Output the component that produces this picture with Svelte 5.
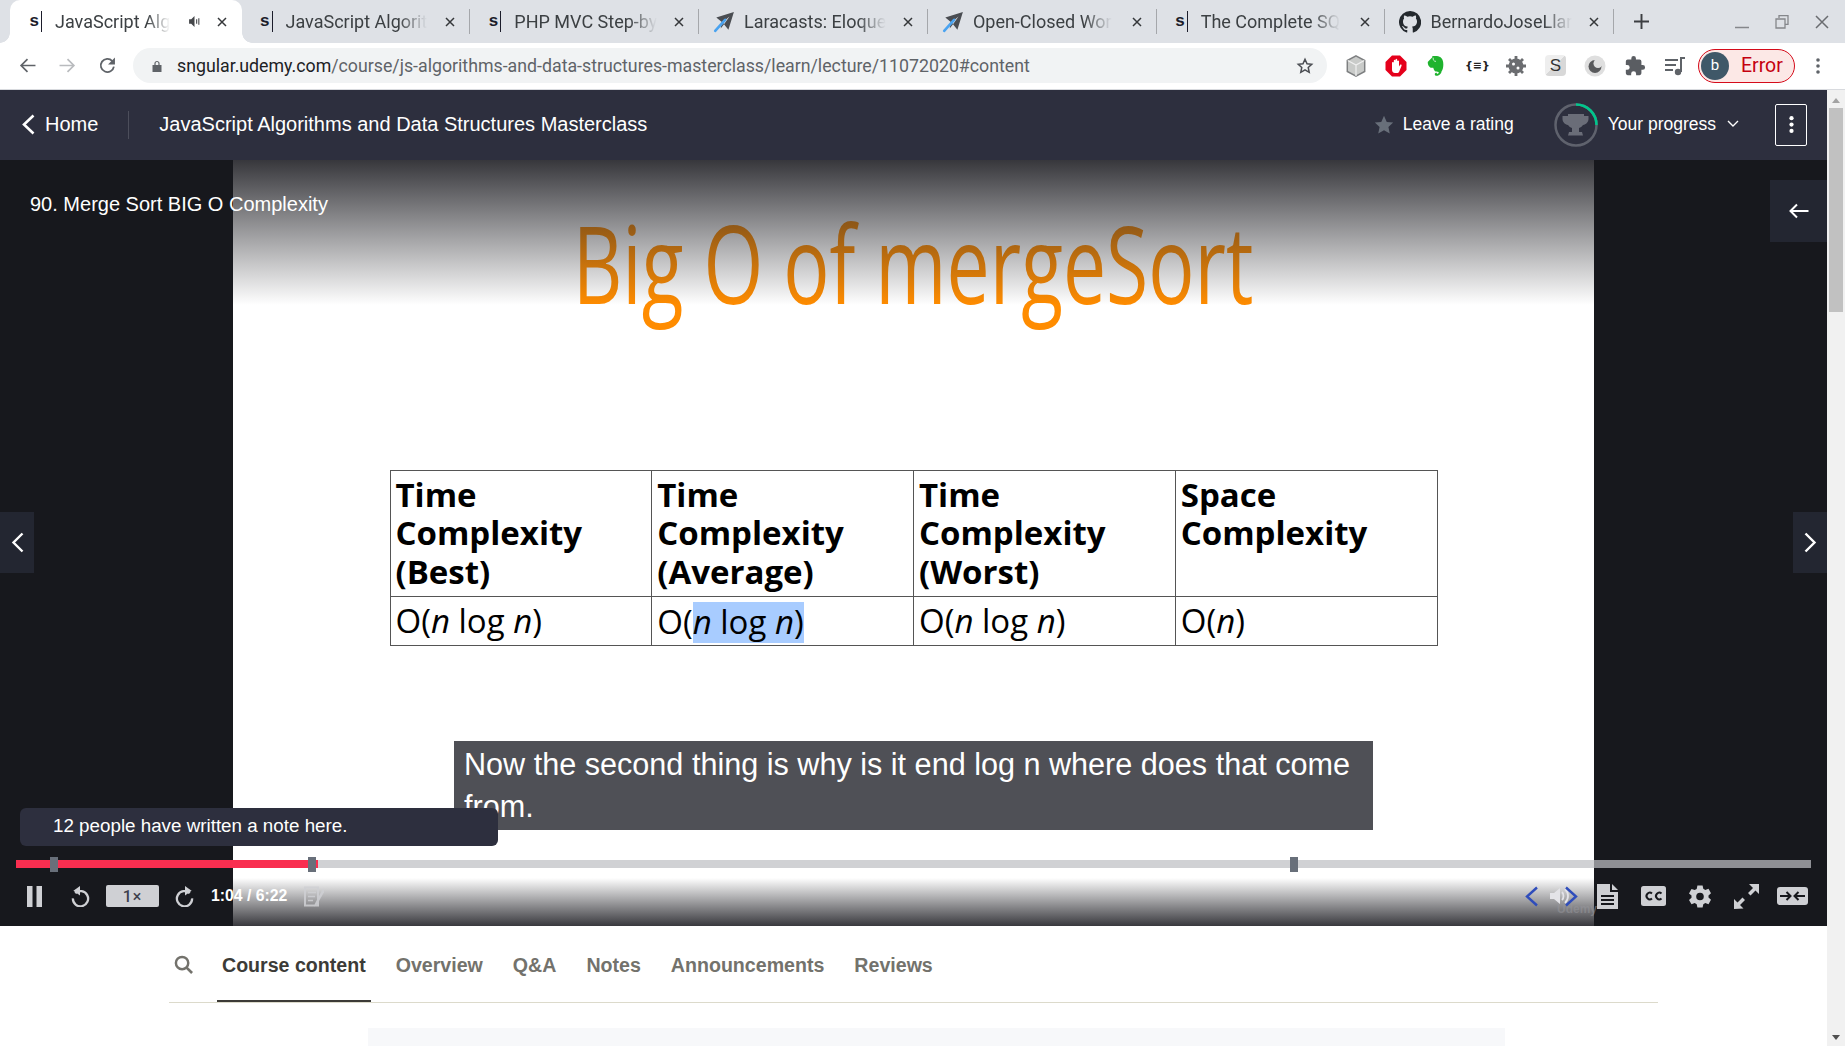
<script>
  const tabs = [
    { title: "JavaScript Alg", icon: "udemy", active: true, sound: true },
    { title: "JavaScript Algorit", icon: "udemy" },
    { title: "PHP MVC Step-by", icon: "udemy" },
    { title: "Laracasts: Eloque", icon: "plane" },
    { title: "Open-Closed Wor", icon: "plane" },
    { title: "The Complete SQ", icon: "udemy" },
    { title: "BernardoJoseLlar", icon: "github" }
  ];

  const courseTabs = ["Course content", "Overview", "Q&A", "Notes", "Announcements", "Reviews"];
</script>

<div class="page">
  <div class="tabstrip">
    {#each tabs as tab}
      <div class="tab" class:active={tab.active}>
        {#if tab.icon === "udemy"}
          <span class="fav-udemy">s</span>
        {:else if tab.icon === "plane"}
          <svg class="fav" viewBox="0 0 20 20"><path d="M19 1 3 6l5 4-1 6 3-4 4 5zM15 5l-6 5 1 2z" fill="#4a4d52" fill-rule="evenodd"/><path d="M11 8 2 18" stroke="#4aa3f0" stroke-width="2.400" stroke-linecap="round"/></svg>
        {:else}
          <svg class="fav" viewBox="0 0 16 16"><path fill="#24292e" d="M8 0a8 8 0 0 0-2.500 15.600c.4.1.5-.2.5-.4v-1.400c-2.200.5-2.700-1-2.700-1-.4-.9-.9-1.200-.9-1.200-.7-.5.1-.5.1-.5.8.1 1.200.8 1.200.8.7 1.200 1.900.9 2.300.7.1-.5.3-.9.5-1.100-1.800-.2-3.600-.9-3.600-4 0-.9.3-1.600.8-2.100-.1-.2-.4-1 .1-2.100 0 0 .7-.2 2.200.8a7.600 7.600 0 0 1 4 0c1.500-1 2.200-.8 2.200-.8.4 1.100.2 1.900.1 2.100.5.6.8 1.300.8 2.100 0 3.100-1.900 3.800-3.700 4 .3.300.6.700.6 1.500v2.200c0 .2.1.5.6.4A8 8 0 0 0 8 0z"/></svg>
        {/if}
        <span class="tab-title">{tab.title}</span>
        {#if tab.sound}
          <svg class="speaker" viewBox="0 0 12 12"><path d="M1 4h2l3-3v10L3 8H1z" fill="#45474a"/><path d="M8 4v4M10 3v6" stroke="#45474a"/></svg>
        {/if}
        <svg class="close" viewBox="0 0 10 10"><path d="M1 1l8 8M9 1 1 9" stroke="#35373a" stroke-width="1.500"/></svg>
      </div>
    {/each}
    <svg class="newtab" viewBox="0 0 14 14"><path d="M7 0v14M0 7h14" stroke="#3c3e42" stroke-width="1.800"/></svg>
    <div class="window-btns">
      <svg viewBox="0 0 14 14"><path d="M0 12.500h14" stroke="#85878b" stroke-width="1.500"/></svg>
      <svg viewBox="0 0 14 14"><path d="M4 3V.7h9v8.600h-3M1 4h9v9H1z" fill="none" stroke="#85878b" stroke-width="1.300"/></svg>
      <svg viewBox="0 0 14 14"><path d="M1 1l12 12M13 1 1 13" stroke="#6a6c70" stroke-width="1.500"/></svg>
    </div>
  </div>

  <div class="toolbar">
    <svg class="nav" viewBox="0 0 16 16"><path d="M15.500 8H2M8 2 2 8l6 6" fill="none" stroke="#5f6368" stroke-width="1.600"/></svg>
    <svg class="nav" viewBox="0 0 16 16"><path d="M.5 8H14M8 2l6 6-6 6" fill="none" stroke="#b9bbbe" stroke-width="1.600"/></svg>
    <svg class="nav" viewBox="0 0 16 16"><path d="M14 9A6.200 6.200 0 1 1 12.500 3.800" fill="none" stroke="#5f6368" stroke-width="1.700"/><path d="M15 .5v6.500H8.500z" fill="#5f6368"/></svg>
    <div class="omnibox">
      <svg class="lock" viewBox="0 0 10 12"><path d="M.5 5h9v7h-9z" fill="#5f6368"/><path d="M3 5V3.500a2 2 0 0 1 4 0V5" fill="none" stroke="#5f6368" stroke-width="1.200"/></svg>
      <span class="url"><b>sngular.udemy.com</b>/course/js-algorithms-and-data-structures-masterclass/learn/lecture/11072020#content</span>
      <svg class="bookmark" viewBox="0 0 24 24"><path d="m12 3 2.700 6 6.300.7-4.700 4.300 1.300 6.400L12 17.200l-5.600 3.200 1.300-6.400L3 9.700 9.300 9z" fill="none" stroke="#4a4d52" stroke-width="2"/></svg>
    </div>
    <div class="extensions">
      <svg viewBox="0 0 22 24"><path d="M11 1 20.500 6v12L11 23 1.500 18V6z" fill="#c9cbc9" stroke="#7d7f80" stroke-width="1.600"/><path d="M11 11v12M2 6l9 5 9-5" fill="none" stroke="#f0f0f0" stroke-width="1.300"/></svg>
      <svg viewBox="0 0 22 22"><path d="M7 .5h8L21.500 7v8L15 21.500H7L.5 15V7z" fill="#e5001b"/><path d="M7 11V7.500a1 1 0 0 1 1.800 0V10V5.500a1 1 0 0 1 1.700 0V10V4.500a1 1 0 0 1 1.700 0V10V6a1 1 0 0 1 1.800 0v5.500l1-1.500c1-1 2 0 1.500 1L14 17c-.5.700-1 1-2 1H10c-2 0-3-1.500-3-3.500z" fill="#fff"/></svg>
      <svg viewBox="0 0 20 24"><path d="M1 7.500 6 2.500V1h5c4 .5 7 3 7 9 0 3-.5 6-2 8 0 3-5 6-7 4-1-1.500.5-3.500 2-2.500-.8 1.500 2 1.500 2-1-4 0-5-1-6-4.500-3 .3-6-1.500-6-6.500z" fill="#1fb32e"/><path d="M7 3c-.5 2 .5 4 3 4" fill="none" stroke="#fff" stroke-width=".8"/></svg>
      <span class="ext-json">{"{≡}"}</span>
      <svg viewBox="0 0 22 22"><circle cx="11" cy="11" r="7.500" fill="#6b6d70"/><path d="M11 1v20M1 11h20M4 4l14 14M18 4 4 18" stroke="#6b6d70" stroke-width="2.800"/><circle cx="8.500" cy="9" r="1.500" fill="#fff"/><circle cx="13" cy="13" r="1.500" fill="#fff"/></svg>
      <span class="ext-s">S</span>
      <svg viewBox="0 0 22 22"><circle cx="11" cy="11" r="10.500" fill="#dfdfdf"/><circle cx="11" cy="11.500" r="6.500" fill="#58595b"/><circle cx="14" cy="8.500" r="4.500" fill="#dfdfdf"/></svg>
      <svg viewBox="0 0 24 24"><path fill="#5a5d62" d="M20.500 11H19V7a2 2 0 0 0-2-2h-4V3.500a2.500 2.500 0 0 0-5 0V5H4a2 2 0 0 0-2 2v3.800h1.500a2.700 2.700 0 0 1 0 5.400H2V20a2 2 0 0 0 2 2h3.800v-1.500a2.700 2.700 0 0 1 5.400 0V22H17a2 2 0 0 0 2-2v-4h1.500a2.500 2.500 0 0 0 0-5z"/></svg>
      <svg viewBox="0 0 22 22"><path d="M1 5h13M1 10h11M1 15h8" stroke="#5f6368" stroke-width="1.800"/><path d="M17 17V3h4" fill="none" stroke="#5f6368" stroke-width="2"/><circle cx="14" cy="17" r="3.200" fill="#5f6368"/></svg>
    </div>
    <div class="profile">
      <span class="avatar">b</span>
      <span>Error</span>
    </div>
    <svg class="kebab" viewBox="0 0 4 16"><circle cx="2" cy="2" r="1.800"/><circle cx="2" cy="8" r="1.800"/><circle cx="2" cy="14" r="1.800"/></svg>
  </div>

  <div class="viewport">
    <div class="content">
      <header class="course-header">
        <svg class="back" viewBox="0 0 14 21"><path d="M12.500 1.500 3 10.500l9.500 9" fill="none" stroke="#fff" stroke-width="2.600"/></svg>
        <span class="home">Home</span>
        <span class="divider"></span>
        <span class="course-title">JavaScript Algorithms and Data Structures Masterclass</span>
        <div class="header-right">
          <svg class="rate-star" viewBox="0 0 24 24"><path d="m12 1 3.300 7.300 7.700.8-5.700 5.300 1.600 7.800L12 18.300l-6.900 3.900 1.600-7.800L1 9.100l7.700-.8z"/></svg>
          <span class="rate">Leave a rating</span>
          <div class="ring">
            <svg viewBox="0 0 44 44">
              <circle cx="22" cy="22" r="20.500" fill="none" stroke="#5f626d" stroke-width="2.500"/>
              <path d="M22 1.500A20.500 20.500 0 0 1 42.500 22" fill="none" stroke="#00c68c" stroke-width="2.500"/>
              <path d="M14 11h16v2h4.500v3c0 3-2.500 5.500-5.500 6-1 1.700-2.500 2.500-4 3V29h3l1 3.500H14l1-3.500h3v-4c-1.500-.5-3-1.300-4-3-3-.5-5.500-3-5.500-6v-3H14z" fill="#6a6d78"/>
            </svg>
          </div>
          <span class="progress-label">Your progress</span>
          <svg class="chev" viewBox="0 0 12 8"><path d="m1 1 5 5 5-5" fill="none" stroke="#fff" stroke-width="1.400"/></svg>
          <div class="more">
            <svg viewBox="0 0 4 16"><circle cx="2" cy="2" r="2"/><circle cx="2" cy="8" r="2"/><circle cx="2" cy="14" r="2"/></svg>
          </div>
        </div>
      </header>

      <section class="player">
        <div class="slide">
          <h1>Big O of mergeSort</h1>
          <table>
            <tbody>
              <tr>
                <th>Time Complexity (Best)</th>
                <th>Time Complexity (Average)</th>
                <th>Time Complexity (Worst)</th>
                <th>Space Complexity</th>
              </tr>
              <tr>
                <td>O(<i>n</i> log <i>n</i>)</td>
                <td>O(<span class="selected"><i>n</i> log <i>n</i>)</span></td>
                <td>O(<i>n</i> log <i>n</i>)</td>
                <td>O(<i>n</i>)</td>
              </tr>
            </tbody>
          </table>
          <div class="caption">Now the second thing is why is it end log n where does that come from.</div>
        </div>

        <div class="lecture-title">90. Merge Sort BIG O Complexity</div>

        <div class="sidebar-toggle">
          <svg viewBox="0 0 20 16"><path d="M19.500 8H2M8 1.500 1.500 8 8 14.500" fill="none" stroke="#fff" stroke-width="2"/></svg>
        </div>
        <div class="side-nav left">
          <svg viewBox="0 0 13 21"><path d="M11.500 1.500 2.500 10.500l9 9" fill="none" stroke="#fff" stroke-width="2.400"/></svg>
        </div>
        <div class="side-nav right">
          <svg viewBox="0 0 13 21"><path d="m1.500 1.500 9 9-9 9" fill="none" stroke="#fff" stroke-width="2.400"/></svg>
        </div>

        <div class="note-tip">12 people have written a note here.</div>
        <div class="watermark">Udemy</div>

        <div class="controls">
          <div class="track">
            <div class="played"></div>
            <span class="mark m1"></span>
            <span class="mark m2"></span>
            <span class="mark m3"></span>
          </div>
          <div class="buttons">
            <svg class="pause" viewBox="0 0 15 21"><path d="M0 0h5.500v21H0zM9.500 0H15v21H9.500z"/></svg>
            <svg class="ctl" viewBox="0 0 20 22"><path d="M4.500 7.500A8 8 0 1 1 2 13" fill="none" stroke="#cfd0d4" stroke-width="2.400"/><path d="M9.500 0v10L2.500 5z"/></svg>
            <span class="speed">1×</span>
            <svg class="ctl" viewBox="0 0 20 22"><path d="M15.500 7.500A8 8 0 1 0 18 13" fill="none" stroke="#cfd0d4" stroke-width="2.400"/><path d="M10.500 0v10l7-5z"/></svg>
            <span class="time">1:04 / 6:22</span>
            <svg class="note-ico" viewBox="0 0 20 20"><path d="M1 1h13v18H1z" fill="none" stroke="#cfd0d4" stroke-width="2"/><path d="M4 6h8M4 10h7M4 14h5" stroke="#cfd0d4" stroke-width="1.600"/><path d="M19 2 11 17l-1 3 3-2 8-14z"/></svg>
            <div class="buttons-right">
              <div class="prev-next">
                <svg class="blue" viewBox="0 0 15 21"><path d="M13 1.500 3 10.500l10 9" fill="none" stroke="#2f4dbb" stroke-width="2.400"/></svg>
                <svg class="volume" viewBox="0 0 20 20"><path d="M0 7h4l6-5v16l-6-5H0z" fill="#e4e4e8"/><path d="M12 6c2 2 2 6 0 8M15 3c4 4 4 10 0 14" fill="none" stroke="#e4e4e8" stroke-width="1.800"/></svg>
                <svg class="blue" viewBox="0 0 15 21"><path d="m2 1.500 10 9-10 9" fill="none" stroke="#2f4dbb" stroke-width="2.400"/></svg>
              </div>
              <svg class="doc" viewBox="0 0 21 25"><path d="M0 0h13v8h8v17H0z"/><path d="M15 0l6 6h-6z"/><path d="M4 12h13M4 16h13M4 20h13" stroke="#17181d" stroke-width="2"/></svg>
              <svg class="cc" viewBox="0 0 25 20"><rect width="25" height="20" rx="2.500"/><path d="M11 7.500a3.300 3.300 0 1 0 0 5M20.500 7.500a3.300 3.300 0 1 0 0 5" fill="none" stroke="#17181d" stroke-width="2"/></svg>
              <svg class="gear" viewBox="0 0 24 24"><path fill-rule="evenodd" d="m14.600 1 .7 3.300 2 1.100 3.200-1.100 2.500 4.400-2.500 2.200v2.200l2.500 2.200-2.500 4.400-3.200-1.100-2 1.100-.7 3.300H9.400l-.7-3.300-2-1.100-3.200 1.100L1 15.500l2.500-2.200v-2.200L1 8.900l2.500-4.400 3.200 1.100 2-1.100L9.400 1zM12 8.200a3.800 3.800 0 1 0 0 7.600 3.800 3.800 0 0 0 0-7.600z"/></svg>
              <svg class="expand" viewBox="0 0 25 25"><path d="M15 0h10v10l-3.500-3.500-5 5-2.500-2.500 5-5zM0 25V15l3.500 3.500 5-5 2.500 2.500-5 5 3.500 3.500z"/></svg>
              <svg class="toggle" viewBox="0 0 31 18"><rect width="31" height="18" rx="3"/><path d="M3 9h10M9.500 5l4 4-4 4M28 9H18M21.500 5l-4 4 4 4" fill="none" stroke="#17181d" stroke-width="2"/></svg>
            </div>
          </div>
        </div>
      </section>

      <nav class="course-tabs">
        <svg class="search" viewBox="0 0 20 20"><circle cx="8.500" cy="8.500" r="6.500" fill="none" stroke="#73726c" stroke-width="2.600"/><path d="m13 13 6 6" stroke="#73726c" stroke-width="2.800"/></svg>
        {#each courseTabs as label, i}
          <span class="course-tab" class:current={i === 0}>{label}</span>
        {/each}
      </nav>
      <div class="panel"></div>
    </div>

    <div class="scrollbar">
      <span class="arrow up"></span>
      <div class="thumb"></div>
      <span class="arrow down"></span>
    </div>
  </div>
</div>

<style>
  :global(body) {
    margin: 0;
    overflow: hidden;
  }

  .page {
    width: 1845px;
    height: 1046px;
    display: flex;
    flex-direction: column;
    overflow: hidden;
    background: #fff;
    font-family: "Liberation Sans", Arial, sans-serif;
  }

  /* browser chrome */
  .tabstrip {
    height: 43px;
    flex: none;
    display: flex;
    align-items: center;
    background: #dee1e6;
    padding-left: 10px;
    box-sizing: border-box;
  }
  .tab {
    width: 228.800px;
    height: 43px;
    flex: none;
    box-sizing: border-box;
    display: flex;
    align-items: center;
    padding: 0 15px 0 14px;
    position: relative;
    font-family: Roboto, "Noto Sans", sans-serif;
    font-size: 18px;
    color: #3c4043;
  }
  .tab::after {
    content: "";
    position: absolute;
    right: 0;
    top: 9px;
    height: 25px;
    width: 1px;
    background: #a5a7ab;
  }
  .tab.active {
    background: #fff;
    border-radius: 10px 10px 0 0;
    width: 231.500px;
    padding-left: 15px;
  }
  .tab.active::before,
  .tab.active::after {
    content: "";
    position: absolute;
    top: auto;
    bottom: 0;
    width: 10px;
    height: 10px;
  }
  .tab.active::before {
    left: -10px;
    background: radial-gradient(circle at 0 0, transparent 9.500px, #fff 10px);
  }
  .tab.active::after {
    right: -10px;
    background: radial-gradient(circle at 100% 0, transparent 9.500px, #fff 10px);
  }
  .fav-udemy {
    width: 17px;
    height: 21px;
    flex: none;
    box-sizing: border-box;
    border-right: 1px solid #1c1d2b;
    padding-right: 2px;
    text-align: right;
    font: bold 17px/20px "Liberation Sans", sans-serif;
    color: #1c1d2b;
    margin-right: 13px;
  }
  .fav {
    width: 22px;
    height: 22px;
    flex: none;
    margin-right: 9px;
  }
  .tab-title {
    white-space: nowrap;
    -webkit-mask-image: linear-gradient(to right, #000 80%, transparent 100%);
    mask-image: linear-gradient(to right, #000 80%, transparent 100%);
  }
  .speaker {
    width: 13px;
    height: 13px;
    flex: none;
    margin-left: auto;
    margin-right: 16px;
  }
  .close {
    width: 10px;
    height: 10px;
    flex: none;
  }
  .tab-title + .close {
    margin-left: auto;
  }
  .newtab {
    width: 15px;
    height: 15px;
    margin-left: 20px;
  }
  .window-btns {
    margin-left: auto;
    display: flex;
    gap: 26px;
    padding-right: 16px;
  }
  .window-btns svg {
    width: 14px;
    height: 14px;
  }

  .toolbar {
    height: 47px;
    flex: none;
    box-sizing: border-box;
    display: flex;
    align-items: center;
    background: #fff;
    border-bottom: 1px solid #d8dade;
    padding: 0 0 1px 19px;
  }
  .nav {
    width: 17px;
    height: 17px;
    margin-right: 23px;
    flex: none;
  }
  .nav:nth-child(3) {
    margin-right: 17px;
  }
  .omnibox {
    width: 1194px;
    height: 35px;
    box-sizing: border-box;
    flex: none;
    display: flex;
    align-items: center;
    background: #f1f3f4;
    border-radius: 18px;
    padding: 0 13px 0 19px;
    font-family: Roboto, "Noto Sans", sans-serif;
    font-size: 17.760px;
    color: #5f6368;
  }
  .lock {
    width: 10px;
    height: 12px;
    margin-right: 15px;
    flex: none;
  }
  .url {
    flex: 1;
    white-space: nowrap;
  }
  .url b {
    font-weight: 400;
    color: #202124;
  }
  .bookmark {
    width: 18px;
    height: 18px;
  }
  .extensions {
    display: flex;
    align-items: center;
    gap: 18px;
    margin-left: 18px;
    flex: none;
  }
  .extensions svg {
    width: 22px;
    height: 22px;
    flex: none;
  }
  .ext-json {
    width: 22px;
    font: bold 11px "DejaVu Sans", sans-serif;
    text-align: center;
    color: #222;
    white-space: nowrap;
  }
  .ext-s {
    width: 21px;
    height: 21px;
    text-align: center;
    font: 17px/21px "Liberation Sans", sans-serif;
    background: linear-gradient(135deg, #eee 50%, #d8d8d8 50%);
    border-radius: 4px;
    color: #333;
    flex: none;
  }
  .profile {
    width: 97px;
    height: 34px;
    box-sizing: border-box;
    flex: none;
    margin-left: 12px;
    display: flex;
    align-items: center;
    gap: 12px;
    padding-left: 2px;
    border: 1px solid #d50b1a;
    border-radius: 17px;
    background: #fce8e6;
    color: #c5000f;
    font-family: Roboto, sans-serif;
    font-size: 19.500px;
  }
  .avatar {
    width: 28px;
    height: 28px;
    border-radius: 50%;
    background: #3f5868;
    color: #fff;
    font-size: 15px;
    line-height: 27px;
    text-align: center;
  }
  .kebab {
    width: 4px;
    height: 16px;
    margin-left: 21px;
    fill: #5f6368;
  }

  /* page area */
  .viewport {
    flex: 1;
    min-height: 0;
    display: flex;
  }
  .content {
    flex: 1;
    min-width: 0;
    display: flex;
    flex-direction: column;
  }
  .course-header {
    height: 70px;
    flex: none;
    display: flex;
    align-items: center;
    background: #2d2f3e;
    color: #fff;
    padding: 0 0 1px 21px;
    box-sizing: border-box;
  }
  .back {
    width: 14px;
    height: 21px;
    margin-right: 10px;
  }
  .home {
    font-size: 20px;
  }
  .divider {
    width: 1px;
    height: 28px;
    background: #4c4e5b;
    margin: 0 30px;
  }
  .course-title {
    font-size: 20px;
    white-space: nowrap;
  }
  .header-right {
    margin-left: auto;
    display: flex;
    align-items: center;
    font-size: 17.500px;
  }
  .rate-star {
    width: 20px;
    height: 20px;
    fill: #686f7a;
    margin-right: 9px;
  }
  .ring {
    width: 44px;
    height: 44px;
    margin: 0 10px 0 40px;
  }
  .ring svg {
    display: block;
    width: 44px;
    height: 44px;
  }
  .chev {
    width: 12px;
    height: 8px;
    margin: 0 0 2px 11px;
  }
  .more {
    width: 32px;
    height: 42px;
    box-sizing: border-box;
    border: 1px solid #fff;
    border-radius: 2px;
    margin: 0 20px 0 36px;
    display: flex;
    align-items: center;
    justify-content: center;
  }
  .more svg {
    width: 5px;
    height: 17px;
    fill: #fff;
  }

  .player {
    height: 766px;
    flex: none;
    position: relative;
    background: #17181d;
    overflow: hidden;
  }
  .slide {
    width: 1361px;
    height: 100%;
    margin-left: 233px;
    box-sizing: border-box;
    display: flex;
    flex-direction: column;
    align-items: center;
    background: #fff;
    position: relative;
  }
  /* the player's fades lie over the slide and darken its title */
  .slide::before {
    content: "";
    position: absolute;
    left: 0;
    right: 0;
    top: 0;
    height: 145px;
    background: linear-gradient(to bottom, rgba(40, 40, 45, 0.93), rgba(40, 40, 45, 0));
    z-index: 1;
  }
  .slide::after {
    content: "";
    position: absolute;
    left: 0;
    right: 0;
    bottom: 0;
    height: 48px;
    background: linear-gradient(to bottom, rgba(50, 50, 55, 0), rgba(50, 50, 55, 0.97));
  }
  h1 {
    margin: 38px 0 0;
    font-family: "Open Sans", sans-serif;
    font-weight: 400;
    font-size: 108px;
    line-height: 130px;
    color: #ff8c00;
    white-space: nowrap;
    transform: scaleX(0.712);
  }
  table {
    border-collapse: collapse;
    table-layout: fixed;
    width: 1048px;
    margin-top: 142px;
    font-family: "Open Sans", sans-serif;
    font-size: 33px;
    color: #000;
  }
  th,
  td {
    border: 1px solid #555;
    padding: 0 5px;
    text-align: left;
    vertical-align: top;
    line-height: 38px;
  }
  th {
    height: 126px;
    padding-top: 5px;
    box-sizing: border-box;
    font-weight: 700;
    line-height: 38.400px;
  }
  td {
    height: 49px;
    box-sizing: border-box;
    padding-top: 5px;
  }
  .selected {
    display: inline-block;
    height: 41px;
    line-height: 39px;
    background: #a8ccff;
  }
  .caption {
    width: 919px;
    height: 89px;
    box-sizing: border-box;
    margin-top: 95px;
    padding: 2px 10px 0;
    background: #4f5056;
    color: #fff;
    font-size: 30.600px;
    line-height: 42px;
    overflow: hidden;
  }
  .lecture-title {
    position: absolute;
    left: 30px;
    top: 33px;
    color: #fff;
    font-size: 20px;
    z-index: 2;
  }
  .sidebar-toggle {
    position: absolute;
    right: 0;
    top: 20px;
    width: 57px;
    height: 62px;
    background: #232631;
    display: flex;
    align-items: center;
    justify-content: center;
  }
  .sidebar-toggle svg {
    width: 20px;
    height: 16px;
  }
  .side-nav {
    position: absolute;
    top: 352px;
    width: 34px;
    height: 61px;
    background: #232631;
    display: flex;
    align-items: center;
    justify-content: center;
  }
  .side-nav svg {
    width: 13px;
    height: 21px;
  }
  .side-nav.left {
    left: 0;
  }
  .side-nav.right {
    right: 0;
  }
  .note-tip {
    position: absolute;
    left: 20px;
    top: 648px;
    width: 478px;
    height: 38px;
    box-sizing: border-box;
    background: #2d2f3e;
    border-radius: 6px;
    color: #fff;
    font-size: 18.800px;
    line-height: 36px;
    padding-left: 33px;
  }
  .watermark {
    position: absolute;
    left: 1557px;
    top: 742px;
    font-size: 12px;
    font-weight: 700;
    color: rgba(150, 150, 155, 0.55);
  }
  .controls {
    position: absolute;
    left: 0;
    right: 0;
    bottom: 0;
    height: 69px;
  }
  .track {
    position: relative;
    height: 8px;
    margin: 3px 16px 0 16px;
    background: rgba(190, 191, 196, 0.72);
  }
  .played {
    width: 302px;
    height: 100%;
    background: #f92e50;
  }
  .mark {
    position: absolute;
    top: -3px;
    width: 8px;
    height: 15px;
    background: #686f7a;
  }
  .m1 {
    left: 34px;
  }
  .m2 {
    left: 292px;
  }
  .m3 {
    left: 1274px;
  }
  .buttons {
    display: flex;
    align-items: center;
    height: 40px;
    margin-top: 8px;
    padding-left: 27px;
    fill: #cfd0d4;
  }
  .pause {
    width: 15px;
    height: 21px;
    margin-right: 29px;
  }
  .ctl {
    width: 19px;
    height: 21px;
    flex: none;
  }
  .speed {
    width: 53px;
    height: 22px;
    background: #cfd0d4;
    border-radius: 2px;
    margin: 0 16px;
    color: #3e404c;
    text-align: center;
    font-family: Roboto, sans-serif;
    font-size: 16px;
    font-weight: 500;
    letter-spacing: 1px;
    line-height: 23px;
  }
  .time {
    margin-left: 17px;
    color: #fff;
    font-size: 15.800px;
    font-weight: 700;
    white-space: nowrap;
  }
  .note-ico {
    width: 20px;
    height: 21px;
    margin-left: 17px;
    opacity: 0.85;
  }
  .buttons-right {
    margin-left: auto;
    display: flex;
    align-items: center;
    padding-right: 19px;
  }
  .prev-next {
    display: flex;
    align-items: center;
    gap: 11px;
    margin-right: 18px;
  }
  .blue {
    width: 15px;
    height: 21px;
    flex: none;
  }
  .volume {
    width: 20px;
    height: 20px;
    margin-right: -17px;
    flex: none;
  }
  .doc {
    width: 21px;
    height: 25px;
    margin-right: 23px;
  }
  .cc {
    width: 25px;
    height: 20px;
    margin-right: 22px;
  }
  .gear {
    width: 24px;
    height: 25px;
    margin-right: 22px;
  }
  .expand {
    width: 25px;
    height: 25px;
    margin-right: 18px;
  }
  .toggle {
    width: 31px;
    height: 18px;
  }

  .course-tabs {
    height: 77px;
    flex: none;
    margin: 0 169px;
    box-sizing: border-box;
    display: flex;
    align-items: stretch;
    gap: 20px;
    border-bottom: 1px solid #dcdacb;
    font-size: 19.600px;
    font-weight: 700;
    color: #73726c;
  }
  .search {
    width: 19px;
    height: 19px;
    align-self: center;
    margin: 0 4px 0 5px;
  }
  .course-tab {
    line-height: 78px;
    padding: 0 5px;
    white-space: nowrap;
  }
  .course-tab.current {
    color: #3c3b37;
    box-shadow: inset 0 -2px 0 #3c3b37;
  }
  .panel {
    margin: 25px 322px 0 368px;
    height: 40px;
    background: #f7f8fa;
  }

  .scrollbar {
    width: 18px;
    flex: none;
    background: #f1f1f1;
    display: flex;
    flex-direction: column;
    align-items: center;
  }
  .arrow {
    width: 0;
    height: 0;
    border-left: 4px solid transparent;
    border-right: 4px solid transparent;
    flex: none;
  }
  .arrow.up {
    border-bottom: 5px solid #a3a3a3;
    margin-top: 8px;
  }
  .arrow.down {
    border-top: 5px solid #505050;
    margin: auto 0 6px;
  }
  .thumb {
    width: 14px;
    height: 204px;
    background: #c1c1c1;
    margin-top: 5px;
  }
</style>
